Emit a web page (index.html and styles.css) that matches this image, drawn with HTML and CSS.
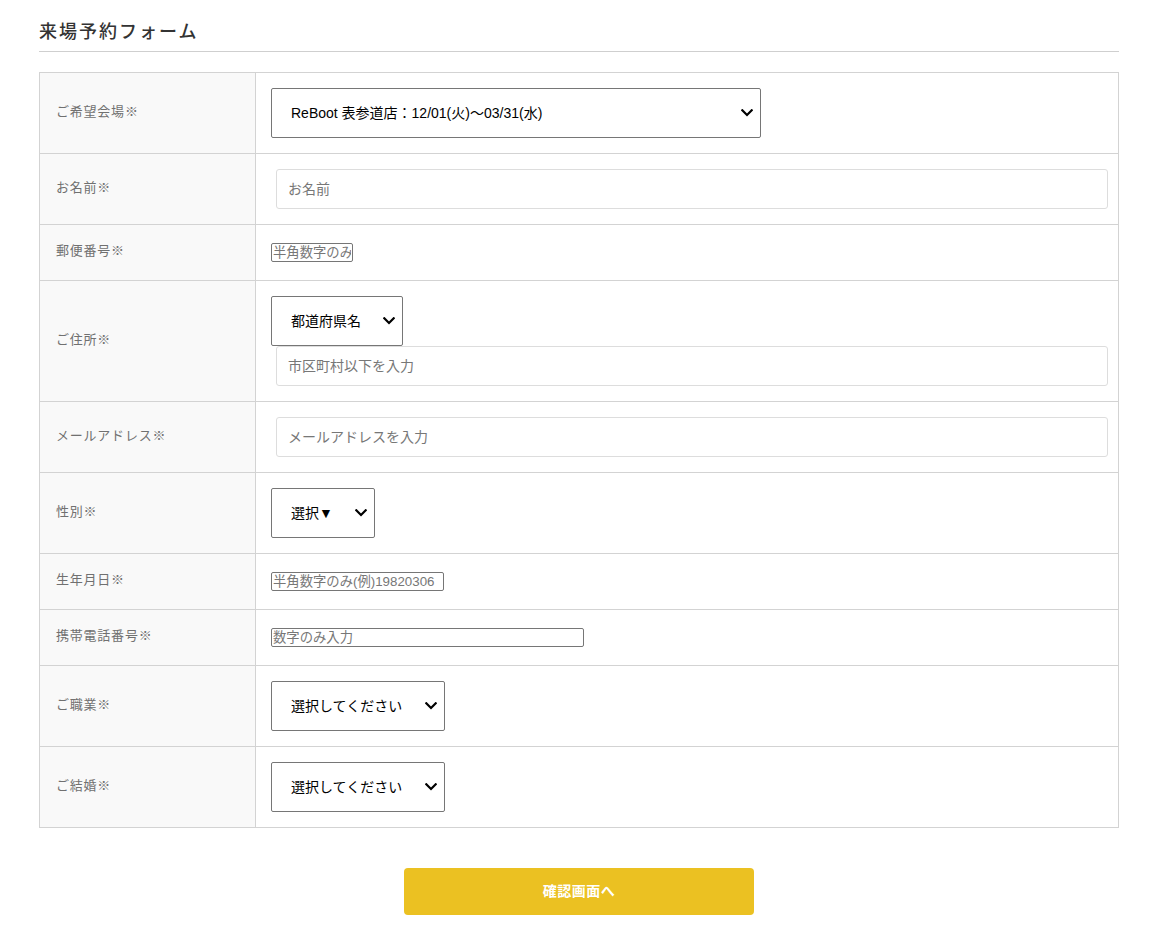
FILE: index.html
```html
<!DOCTYPE html>
<html lang="ja">
<head>
<meta charset="utf-8">
<title>来場予約フォーム</title>
<link rel="stylesheet" href="styles.css">
</head>
<body>
<div class="page">
  <h2 class="title">来場予約フォーム</h2>
  <form class="form">
    <table class="form-table">
      <colgroup><col class="col-label"><col></colgroup>
      <tr class="row-lg">
        <th class="label">ご希望会場※</th>
        <td class="field">
          <span class="select-wrap w-venue">
            <select class="select"><option>ReBoot 表参道店：12/01(火)〜03/31(水)</option></select>
            <svg class="chev" viewBox="0 0 12 8" width="12" height="8"><path d="M1.3 1.3 L6 6 L10.7 1.3" /></svg>
          </span>
        </td>
      </tr>
      <tr>
        <th class="label">お名前※</th>
        <td class="field"><input class="text-input" type="text" placeholder="お名前"></td>
      </tr>
      <tr>
        <th class="label">郵便番号※</th>
        <td class="field"><input class="plain-input w-zip" type="text" placeholder="半角数字のみ"></td>
      </tr>
      <tr>
        <th class="label">ご住所※</th>
        <td class="field">
          <span class="select-wrap w-pref">
            <select class="select"><option>都道府県名</option></select>
            <svg class="chev" viewBox="0 0 12 8" width="12" height="8"><path d="M1.3 1.3 L6 6 L10.7 1.3" /></svg>
          </span>
          <input class="text-input" type="text" placeholder="市区町村以下を入力">
        </td>
      </tr>
      <tr>
        <th class="label">メールアドレス※</th>
        <td class="field"><input class="text-input" type="text" placeholder="メールアドレスを入力"></td>
      </tr>
      <tr>
        <th class="label">性別※</th>
        <td class="field">
          <span class="select-wrap w-sex">
            <select class="select"><option>選択▼</option></select>
            <svg class="chev" viewBox="0 0 12 8" width="12" height="8"><path d="M1.3 1.3 L6 6 L10.7 1.3" /></svg>
          </span>
        </td>
      </tr>
      <tr>
        <th class="label">生年月日※</th>
        <td class="field"><input class="plain-input w-birth" type="text" placeholder="半角数字のみ(例)19820306"></td>
      </tr>
      <tr>
        <th class="label">携帯電話番号※</th>
        <td class="field"><input class="plain-input w-tel" type="text" placeholder="数字のみ入力"></td>
      </tr>
      <tr>
        <th class="label">ご職業※</th>
        <td class="field">
          <span class="select-wrap w-choice">
            <select class="select"><option>選択してください</option></select>
            <svg class="chev" viewBox="0 0 12 8" width="12" height="8"><path d="M1.3 1.3 L6 6 L10.7 1.3" /></svg>
          </span>
        </td>
      </tr>
      <tr>
        <th class="label">ご結婚※</th>
        <td class="field">
          <span class="select-wrap w-choice">
            <select class="select"><option>選択してください</option></select>
            <svg class="chev" viewBox="0 0 12 8" width="12" height="8"><path d="M1.3 1.3 L6 6 L10.7 1.3" /></svg>
          </span>
        </td>
      </tr>
    </table>
    <div class="actions">
      <button type="button" class="submit">確認画面へ</button>
    </div>
  </form>
</div>
</body>
</html>
```

FILE: styles.css
```css
* { box-sizing: border-box; }

html, body {
  margin: 0;
  padding: 0;
  background: #fff;
}

body {
  font-family: "Liberation Sans", "Noto Sans CJK JP", sans-serif;
  color: #333;
}

.page {
  width: 1080px;
  margin: 0 0 0 39px;
  padding-top: 19px;
}

.title {
  margin: 0 0 20px;
  padding: 0 0 6px;
  font-size: 18px;
  line-height: 26px;
  font-weight: 500;
  letter-spacing: 2px;
  color: #333;
  border-bottom: 1px solid #cfcfcf;
}

.form { margin: 0; }

.form-table {
  width: 1080px;
  border-collapse: collapse;
  table-layout: fixed;
}

.col-label { width: 216px; }

.form-table th,
.form-table td {
  border: 1px solid #d3d3d3;
}

.label {
  background: #f9f9f9;
  text-align: left;
  font-weight: 400;
  font-size: 13px;
  letter-spacing: 0.06em;
  line-height: 25px;
  color: #707070;
  padding: 13px 16px 17px;
  vertical-align: middle;
}

.field {
  padding: 15px 15px;
  vertical-align: middle;
  line-height: 0;
}

.select-wrap {
  position: relative;
  display: block;
  height: 50px;
}

.w-venue { width: 490px; }
.w-pref { width: 132px; }
.w-sex { width: 104px; }
.w-choice { width: 174px; }

.select {
  appearance: none;
  -webkit-appearance: none;
  display: block;
  width: 100%;
  height: 50px;
  margin: 0;
  padding: 0 30px 1px 19px;
  border: 1px solid #767676;
  border-radius: 2px;
  background: #fff;
  font-family: "Liberation Sans", "Noto Sans CJK JP", sans-serif;
  font-size: 14px;
  color: #000;
}

.chev {
  position: absolute;
  right: 8px;
  top: 21px;
  width: 12px;
  height: 8px;
  pointer-events: none;
}

.chev path {
  fill: none;
  stroke: #000;
  stroke-width: 2.2;
  stroke-linecap: square;
}

.text-input {
  display: block;
  width: 832px;
  height: 40px;
  margin: 0 0 0 5px;
  padding: 0 11px 1px;
  border: 1px solid #ddd;
  border-radius: 3px;
  background: #fff;
  font-family: "Liberation Sans", "Noto Sans CJK JP", sans-serif;
  font-size: 14px;
  color: #333;
}

.text-input::placeholder { color: #777; }

.plain-input {
  display: block;
  height: 19px;
  margin: 0;
  padding: 0 1px;
  border: 1px solid #767676;
  border-radius: 2px;
  background: #fff;
  font-family: "Liberation Sans", "Noto Sans CJK JP", sans-serif;
  font-size: 13.33px;
  color: #333;
}

.plain-input::placeholder { color: #777; }

.w-zip { width: 82px; }
.w-birth { width: 173px; }
.w-tel { width: 313px; }

.actions {
  display: flex;
  justify-content: center;
  margin-top: 40px;
  padding-bottom: 33px;
}

.submit {
  width: 350px;
  height: 47px;
  border: 0;
  border-radius: 4px;
  background: #ebc122;
  color: #fff;
  font-family: "Liberation Sans", "Noto Sans CJK JP", sans-serif;
  font-size: 14px;
  font-weight: 700;
  letter-spacing: 0.5px;
  padding: 0 0 3px;
  cursor: pointer;
}
```
